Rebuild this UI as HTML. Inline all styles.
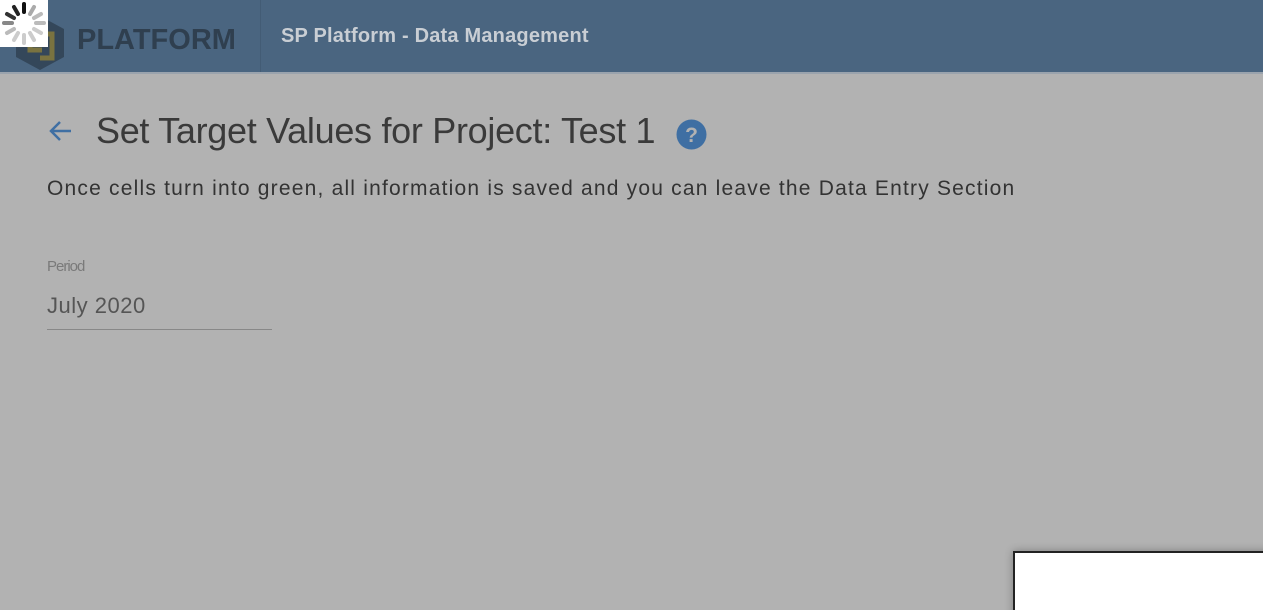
<!DOCTYPE html>
<html><head><style>
html,body{margin:0;width:1263px;height:610px;overflow:hidden}
body{background:#b2b2b2;font-family:"Liberation Sans",sans-serif;position:relative}
.hdr{position:absolute;left:0;top:0;width:1263px;height:72px;background:#4a6580;border-bottom:2px solid #9aa3ad}
.logo{position:absolute;left:0;top:0;width:260px;height:72px;border-right:1px solid #435c75}
.ptxt{position:absolute;left:77px;top:24px;font-size:29px;font-weight:bold;color:#2f3f4f;letter-spacing:0}
.sp{position:absolute;left:281px;top:25px;font-size:20px;font-weight:bold;color:#c9ced4;letter-spacing:0.2px}
.spin{position:absolute;left:0;top:0;width:48px;height:47px;background:#fff}
h1{position:absolute;left:96px;top:110px;margin:0;font-weight:normal;font-size:36px;color:#3a3a3a;letter-spacing:-0.3px}
.sub{position:absolute;left:47px;top:177px;font-size:21px;color:#333;letter-spacing:1.2px;white-space:nowrap}
.lbl{position:absolute;left:47px;top:258px;font-size:15px;color:#7a7a7a;letter-spacing:-1px}
.val{position:absolute;left:47px;top:293px;font-size:22px;color:#555;letter-spacing:0.5px}
.line{position:absolute;left:47px;top:329px;width:225px;height:1px;background:#888}
.box{position:absolute;left:1013px;top:551px;width:260px;height:70px;background:#fff;border:2px solid #222;box-shadow:0 0 8px rgba(0,0,0,.3)}
</style></head><body>
<div class="hdr">
<div class="logo">
<svg style="position:absolute;left:12px;top:14px" width="56" height="58" viewBox="0 0 56 58">
<polygon points="28,2 52,15 52,43 28,56 4,43 4,15" fill="#34475a"/>
<path d="M18,20 L40,20 L40,44 L28,44 M18,20 L18,36 L30,36" stroke="#7a7340" stroke-width="5" fill="none"/>
</svg>
<div class="ptxt">PLATFORM</div>
</div>
<div class="sp">SP Platform - Data Management</div>
</div>
<div class="spin"><svg width="48" height="47" viewBox="0 0 48 47">
<g stroke-width="4" stroke-linecap="round">
<line x1="24" y1="4" x2="24" y2="12" stroke="#111"/>
<line x1="34" y1="7" x2="30" y2="14" stroke="#aaa"/>
<line x1="41" y1="14" x2="34" y2="18" stroke="#bbb"/>
<line x1="44" y1="23" x2="36" y2="23" stroke="#bbb"/>
<line x1="41" y1="33" x2="34" y2="29" stroke="#ccc"/>
<line x1="34" y1="40" x2="30" y2="33" stroke="#ccc"/>
<line x1="24" y1="43" x2="24" y2="35" stroke="#ccc"/>
<line x1="14" y1="40" x2="18" y2="33" stroke="#ccc"/>
<line x1="7" y1="33" x2="14" y2="29" stroke="#bbb"/>
<line x1="4" y1="23" x2="12" y2="23" stroke="#888"/>
<line x1="7" y1="14" x2="14" y2="18" stroke="#333"/>
<line x1="14" y1="7" x2="18" y2="14" stroke="#222"/>
</g></svg></div>
<svg style="position:absolute;left:47px;top:119px" width="26" height="24" viewBox="0 0 26 24"><path d="M24,12 H4 M13,3 L4,12 L13,21" stroke="#3f6fa3" stroke-width="2.5" fill="none"/></svg>
<h1>Set Target Values for Project: Test 1</h1>
<svg style="position:absolute;left:676px;top:119px" width="31" height="31" viewBox="0 0 31 31"><circle cx="15.5" cy="15.5" r="15" fill="#3f6fa3"/><text x="15.5" y="23" font-family="Liberation Sans" font-weight="bold" font-size="21" fill="#b2b2b2" text-anchor="middle">?</text></svg>
<div class="sub">Once cells turn into green, all information is saved and you can leave the Data Entry Section</div>
<div class="lbl">Period</div>
<div class="val">July 2020</div>
<div class="line"></div>
<div class="box"></div>
</body></html>
